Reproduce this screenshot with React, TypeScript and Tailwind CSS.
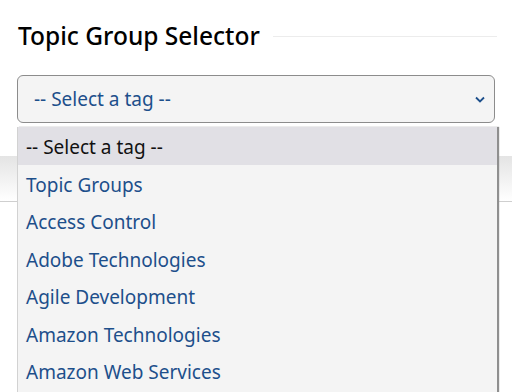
import React from "react";

const tags = [
  "Topic Groups",
  "Access Control",
  "Adobe Technologies",
  "Agile Development",
  "Amazon Technologies",
  "Amazon Web Services",
];

export default function App() {
  return (
    <div className="relative h-[392px] w-[512px] overflow-hidden bg-white font-['Noto_Sans',sans-serif]">
      <div className="flex items-center gap-[13px] pl-[18px] pr-[15px] pt-[20px]">
        <h2 className="text-[24.5px] leading-[32px] font-medium text-black whitespace-nowrap">
          Topic Group Selector
        </h2>
        <div className="h-px flex-1 bg-[#ececec]" />
      </div>

      <div className="mx-[17px] mt-[23px] flex h-[48px] items-center justify-between rounded-[6px] border border-[#8c8c8c] bg-[#f4f4f4] pl-[16px] pr-[9px]">
        <span className="text-[19px] text-[#1d4f8b]">-- Select a tag --</span>
        <svg width="10" height="7" viewBox="0 0 10 7" className="text-[#1d4f8b]">
          <path d="M1 1.5 L5 5.5 L9 1.5" fill="none" stroke="currentColor" strokeWidth="1.8" />
        </svg>
      </div>

      {/* toolbar band behind the open list */}
      <div className="mt-[33px] h-[46px] border-b border-[#cfcfcf] bg-gradient-to-b from-[#e4e4e4] to-white" />

      <ul className="absolute left-[17px] top-[127px] h-[270px] w-[480px] border-l border-[#d2d2d2] bg-[#f4f4f4] shadow-[2px_0_1px_#8f8f8f]">
        <li className="flex h-[38px] items-center bg-[#e1e0e5] pl-[8px] pt-[3px] text-[19px] text-[#111]">
          -- Select a tag --
        </li>
        {tags.map((tag) => (
          <li
            key={tag}
            className="flex h-[37.4px] items-center pl-[8px] pt-[3px] text-[19px] text-[#1d4f8b]"
          >
            {tag}
          </li>
        ))}
      </ul>
    </div>
  );
}
